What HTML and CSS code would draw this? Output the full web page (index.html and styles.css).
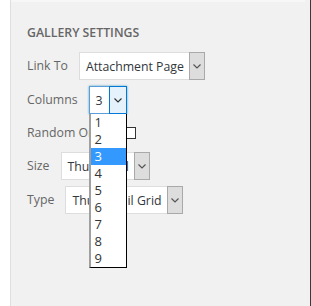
FILE: index.html
```html
<!DOCTYPE html>
<html lang="en">
<head>
    <meta charset="UTF-8">
    <title>Gallery Settings</title>
    <link rel="stylesheet" href="styles.css">
</head>
<body>
    <div class="panel">
        <div class="panel-top"></div>
        <h2>Gallery Settings</h2>

        <div class="settings">
            <div class="row">
                <span class="label">Link To</span>
                <div class="select w-link">
                    <span class="value">Attachment Page</span>
                    <span class="arrow"><svg width="8" height="5" viewBox="0 0 8 5"><path d="M0.5 0.5 L4 4 L7.5 0.5" fill="none" stroke="#555" stroke-width="1.2"/></svg></span>
                </div>
            </div>

            <div class="row">
                <span class="label">Columns</span>
                <div class="select focused w-cols">
                    <span class="value">3</span>
                    <span class="arrow"><svg width="8" height="5" viewBox="0 0 8 5"><path d="M0.5 0.5 L4 4 L7.5 0.5" fill="none" stroke="#333" stroke-width="1.2"/></svg></span>
                    <ul class="dropdown">
                        <li>1</li>
                        <li>2</li>
                        <li class="active">3</li>
                        <li>4</li>
                        <li>5</li>
                        <li>6</li>
                        <li>7</li>
                        <li>8</li>
                        <li>9</li>
                    </ul>
                </div>
            </div>

            <div class="row row-check">
                <span class="label">Random Order</span>
                <span class="checkbox"></span>
            </div>

            <div class="row">
                <span class="label">Size</span>
                <div class="select w-size">
                    <span class="value">Thumbnail</span>
                    <span class="arrow"><svg width="8" height="5" viewBox="0 0 8 5"><path d="M0.5 0.5 L4 4 L7.5 0.5" fill="none" stroke="#555" stroke-width="1.2"/></svg></span>
                </div>
            </div>

            <div class="row">
                <span class="label">Type</span>
                <div class="select w-type">
                    <span class="value">Thumbnail Grid</span>
                    <span class="arrow"><svg width="8" height="5" viewBox="0 0 8 5"><path d="M0.5 0.5 L4 4 L7.5 0.5" fill="none" stroke="#555" stroke-width="1.2"/></svg></span>
                </div>
            </div>
        </div>
    </div>
</body>
</html>
```

FILE: styles.css
```css
* {
    margin: 0;
    padding: 0;
    box-sizing: border-box;
}

body {
    background-color: #fff;
    font-family: "Open Sans", Arial, sans-serif;
    font-size: 12.3px;
    color: #666;
    height: 306px;
    overflow: hidden;
}

.panel {
    margin-left: 10px;
    width: 301px;
    height: 306px;
    background-color: #f1f1f1;
    border-left: 1px solid #dedede;
    border-right: 1px solid #3a3a3a;
    padding: 0 16px;
}

.panel-top {
    height: 2px;
    margin: 0 -11px 0 -16px;
    background-color: #f7f7f7;
}

h2 {
    font-size: 12.3px;
    font-weight: 600;
    text-transform: uppercase;
    color: #666;
    line-height: 18px;
    margin-top: 22px;
    margin-bottom: 10px;
}

.settings {
    display: flex;
    flex-direction: column;
    gap: 6px;
}

.row {
    display: flex;
    align-items: center;
    gap: 11px;
    height: 28px;
}

.row-check {
    height: 26px;
}

.label {
    color: #666;
    line-height: 18px;
}

.select {
    position: relative;
    display: flex;
    align-items: center;
    height: 28px;
    background-color: #fff;
    border: 1px solid #ddd;
    color: #32373c;
}

.select .value {
    flex: 1;
    padding-left: 6px;
    white-space: nowrap;
    overflow: hidden;
}

.select .arrow {
    display: flex;
    align-items: center;
    justify-content: center;
    width: 16px;
    height: 28px;
    margin: -1px -1px -1px 0;
    background-color: #dddddd;
    border: 1px solid #a9a9a9;
}

.w-link { width: 126px; }
.w-cols { width: 38px; }
.w-size { width: 89px; }
.w-type { width: 118px; }

.select.focused {
    border-color: #5b9dd9;
    box-shadow: 0 0 2px rgba(30, 140, 190, 0.8);
}

.select.focused .arrow {
    width: 18px;
    background-color: #e5f1fb;
    border-color: #0078d7;
}

.dropdown {
    position: absolute;
    top: 27px;
    left: -1px;
    width: 38px;
    list-style: none;
    background-color: #fff;
    border-left: 2px solid #a0a0a0;
    border-right: 1px solid #000;
    border-bottom: 1px solid #000;
    z-index: 5;
}

.dropdown li {
    height: 17px;
    line-height: 17px;
    padding-left: 4px;
    font-size: 13px;
    color: #333;
}

.dropdown li.active {
    background-color: #3399ff;
    color: #fff;
}

.checkbox {
    display: block;
    width: 12px;
    height: 12px;
    background-color: #fff;
    border: 1px solid #333;
}
```
